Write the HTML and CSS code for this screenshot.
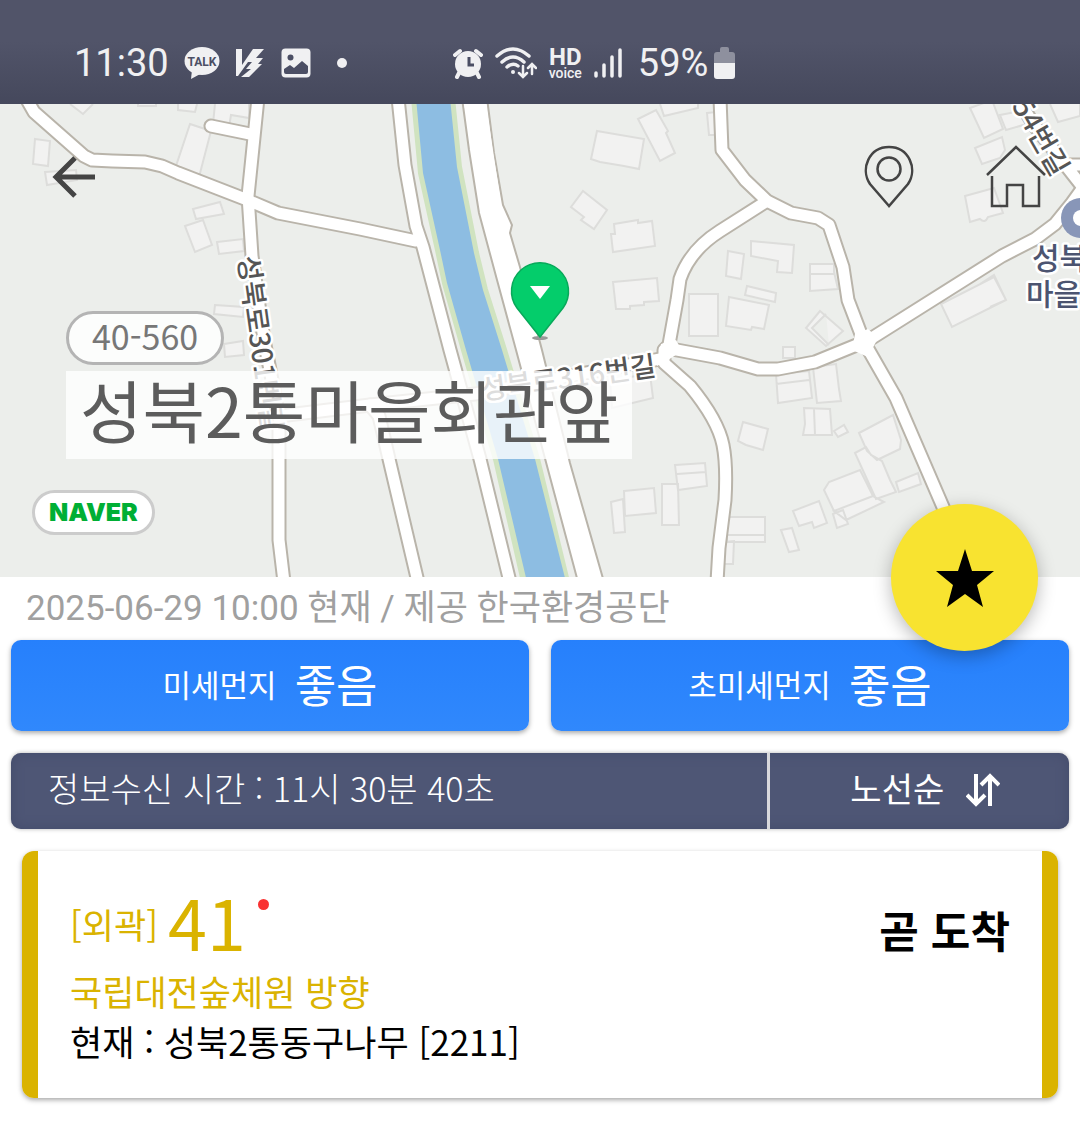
FILE: index.html
```html
<!DOCTYPE html>
<html lang="ko">
<head>
<meta charset="utf-8">
<meta name="viewport" content="width=device-width, initial-scale=1">
<title>성북2통마을회관앞</title>
<link rel="stylesheet" href="styles.css">
</head>
<body>
<div class="status">
  <span class="status-text">11:30</span>
  <div class="status-icons">
    <svg width="36" height="34" viewBox="0 0 36 34" aria-hidden="true"><ellipse cx="18" cy="15" rx="17.500" ry="14" fill="#f0f0f2"/><path d="M8 24L7 33L18 27Z" fill="#f0f0f2"/><text class="talk" x="18" y="20" text-anchor="middle">TALK</text></svg>
    <svg width="29" height="30" viewBox="0 0 29 30" aria-hidden="true"><path fill="#f0f0f2" d="M0 1H6V17L17 1H28L20 10H27L22 16H26L13 29H5L15 21H10L16 14H12L2 28H0Z"/></svg>
    <svg width="30" height="30" viewBox="0 0 30 30" aria-hidden="true"><rect width="29" height="29" x=".5" y=".5" rx="4" fill="#f0f0f2"/><circle cx="9.500" cy="9.500" r="3" fill="#4b4e64"/><path d="M3 21L9 17L13 20L21 13L27 18V24Q27 26 25 26H5Q3 26 3 24Z" fill="#4b4e64"/></svg>
  </div>
  <span class="status-dot"></span>
  <div class="status-right">
    <svg width="30" height="32" viewBox="0 0 30 32" aria-hidden="true"><circle cx="15" cy="17" r="13" fill="#f0f0f2"/><path d="M2 8L7 4M28 8L23 4M6 26L4 30M24 26L26 30" stroke="#f0f0f2" stroke-width="4" stroke-linecap="round"/><path d="M16 10V18H21" fill="none" stroke="#4b4e64" stroke-width="3"/></svg>
    <svg width="42" height="32" viewBox="0 0 42 32" fill="none" stroke="#f0f0f2" stroke-width="3.500" stroke-linecap="round" aria-hidden="true"><path d="M2 9Q18 -5 34 9M7 15Q18 5 29 15M12 20Q18 15 23 19"/><circle cx="18" cy="25" r="2" fill="#f0f0f2" stroke="none"/><path d="M28 19V29M24 26L28 30L32 26M37 27V18M33 21L37 17L41 21" stroke-width="2.500"/></svg>
    <span class="hd"><b>HD</b><small>voice</small></span>
    <svg width="28" height="30" viewBox="0 0 28 30" stroke="#f0f0f2" stroke-width="3.500" stroke-linecap="round" aria-hidden="true"><path d="M2 25V28M10 17V28M18 9V28M26 2V28"/></svg>
    <span class="status-text percent">59%</span>
    <svg width="22" height="34" viewBox="0 0 22 34" aria-hidden="true"><path d="M6 6V3Q6 1 8 1H13Q15 1 15 3V6H18Q21 6 21 9V18H0V9Q0 6 3 6Z" fill="#8e909e"/><path d="M0 17H21V30Q21 33 18 33H3Q0 33 0 30Z" fill="#f0f0f2"/></svg>
  </div>
</div>

<header class="map">
  <svg class="map-canvas" viewBox="0 104 1080 473" preserveAspectRatio="xMidYMid slice" aria-hidden="true">
    <defs>
      <g id="roads">
        <path d="M26 98L34 112L84 156L92 160L112 161L145 162L162 166L178 173L245 199L278 213L360 229L416 241"/>
        <path d="M258 98L248 196L252 256L264 340L274 390L279 420V540L284 582"/>
        <path d="M211 126L250 134"/>
        <path d="M398 98L405 165L416 226L423 247L450 350L480 459L510 582"/>
        <path d="M389 459L418 582M389 459L379 416L370 405"/>
        <path d="M279 416L370 405L475 394L660 359"/>
        <path d="M720 98L722 150L745 180L767 201L791 213L818 218L829 225L843 267L848 300L864 342"/>
        <path d="M767 201L720 231Q690 250 680 279L677 300L668 350"/>
        <path d="M864 343L1002 256L1035 239L1055 224L1072 203L1085 185"/>
        <path d="M1000 70L1034 125L1085 190M1062 165H1090"/>
        <path d="M864 342L815 362L778 369H758L720 358L666 348"/>
        <path d="M864 342L896 398L943 507L956 540"/>
        <path d="M664 350V363L690 386Q718 420 723 445Q727 465 725 500L719 548L717 582"/>
      </g>
    </defs>
    <rect y="104" width="1080" height="473" fill="#eceeeb"/>
    <path d="M416 98L423 173L440 250L447 283L466 350L498 459L526 582H565L535 459L502 350L483 290L474 253L457 167L450 98Z" fill="#8dbde2" stroke="#d0e3c0" stroke-width="10"/>
    <path d="M416 98L423 173L440 250L447 283L466 350L498 459L527 582H566L535 459L502 350L483 290L474 253L457 167L450 98Z" fill="#8dbde2"/>
    <g fill="#f2f2f1" stroke="#dddddb" stroke-width="2">
      <path d="M35 139L50 141L48 166L33 164ZM45 172L76 170L77 180L47 185ZM70 104L83 114L93 104M138 104V106H156V104M178 104V110L195 112L197 104M190 124L211 131L199 177L176 166ZM215 104L213 124L229 127L231 115L249 118V104"/>
      <path d="M193 209L220 202L224 214L196 219ZM185 226L203 220L212 245L195 252ZM217 242L243 239L244 251L219 254ZM215 305L244 307L243 317L214 314ZM224 344L243 341L244 355L225 357Z"/>
      <path d="M597 131L644 139L639 169L624 166L600 162L591 159ZM638 119L656 110L668 131L666 133L675 153L660 161ZM660 104L664 116L698 108V104M707 113L716 112V135L709 135Z"/>
      <path d="M583 191L607 210L594 229L581 220L584 217L571 207ZM614 224L638 220V223L652 221L655 246L613 252L611 234H615ZM613 282L657 278L659 301L644 302V305L630 306V309L616 309ZM689 294H718V336H689Z"/>
      <path d="M751 241L794 245L792 273L777 272L778 261L751 256ZM728 251L744 254L741 279L726 276ZM747 286L776 293L775 302L745 295ZM729 297L769 305L764 329L752 327L751 330L726 326ZM810 264L834 264V272L838 289L810 291ZM810 274H834M820 311L843 331L826 346L806 328ZM826 314L812 328L829 345"/>
      <path d="M970 108L992 100L1003 129L984 138ZM1000 115L1030 109V123L1006 130ZM975 148L1002 137L1005 150L1000 158L982 164ZM965 196L994 188L1003 213L988 217Q985 224 980 219L970 222ZM941 304L994 277L1006 300L952 327ZM980 284L994 275L1006 300L990 307M1050 104L1058 122L1080 116V104"/>
      <path d="M776 374L809 371L812 398L778 403ZM776 384L809 380M813 367L836 364L839 389L841 401L817 403ZM783 347H795V358H783ZM804 408L830 409L832 435H803L805 424ZM814 409L815 435M743 422L768 429L763 450L746 445L738 441ZM834 431L844 425L848 432L838 437Z"/>
      <path d="M859 433L893 415L901 440L900 449L877 460L867 451ZM855 453L866 447L871 455L882 461L890 480L896 492L876 499ZM824 490L829 482L860 470L873 496L834 511ZM834 511L873 496L884 502L846 520ZM833 514L843 510L848 524L837 528ZM896 482L918 473L921 484L899 492ZM793 511L819 501L827 523L814 528L812 522L799 526ZM781 530L792 528L799 550L789 552Z"/>
      <path d="M727 517H765V542H727ZM727 535H765M724 542L734 541L733 564H724ZM675 465L705 463L707 486L678 490ZM677 474L706 472M662 484H678L679 525H662ZM624 491L654 488L656 513L625 516ZM611 502L623 499L625 532L614 533ZM610 380L650 374L653 398L612 408Z"/>
    </g>
    <use href="#roads" class="road-edge"/>
    <path d="M462 98L469 150L479 213L497 280L516 350L578 582H604L570 463L542 350L520 267L510 233L512 225L503 205L494 153L487 98Z" fill="#fff" stroke="#b9b4aa" stroke-width="2"/>
    <use href="#roads" class="road-fill"/>
    <path d="M464 104L500 280L519 350L545 450L558 450L536 350L505 230L486 104Z" fill="#fff"/>
    <path d="M855 334L868 329L878 338L868 357L852 350ZM661 344L676 340L682 351L668 360L657 366Z" fill="#fff"/>
    <g class="road-name">
      <text transform="translate(238 257) rotate(82)">성북로301번길</text>
      <text transform="translate(482 400) rotate(-8)">성북로316번길</text>
      <text transform="translate(1053 178) rotate(60)" text-anchor="end">54번길</text>
    </g>
    <circle cx="1081" cy="218" r="20" fill="#8896b8"/><circle cx="1081" cy="218" r="8" fill="#fff"/>
    <g class="poi"><text x="1032" y="269">성북</text><text x="1026" y="305">마을</text></g>
    <ellipse cx="540" cy="338" rx="8" ry="2" fill="#999"/>
    <path d="M540 337L517 308A28.500 28.500 0 1 1 563 308Z" fill="#04cd6b" stroke="#08a95a" stroke-width="1.500"/>
    <path d="M530 286H550L540 299Z" fill="#fff"/>
  </svg>

  <nav class="nav">
    <button class="icon-btn back" aria-label="뒤로"><svg width="44" height="42" viewBox="0 0 44 42"><path d="M43 21H4M23 2L4 21L23 40" fill="none" stroke="#444" stroke-width="5"/></svg></button>
    <button class="icon-btn" aria-label="위치"><svg width="50" height="63" viewBox="0 0 50 63" fill="none" stroke="#444" stroke-width="2.500"><path d="M25 61L6 39C-4 24 5 2 25 2S54 24 44 39Z"/><circle cx="25" cy="24" r="11.500"/></svg></button>
    <button class="icon-btn" aria-label="홈"><svg width="60" height="63" viewBox="0 0 60 63" fill="none" stroke="#444" stroke-width="2.500"><path d="M1 30L30 2L59 30M6 31V61H21V40H37V61H53V31"/></svg></button>
  </nav>
  <div class="stop">
    <span class="stop-no">40-560</span>
    <h1 class="stop-name">성북2통마을회관앞</h1>
  </div>
  <a class="naver" href="#">NAVER</a>
  <button class="fab" aria-label="즐겨찾기"><svg width="58" height="58" viewBox="0 0 58 58"><path d="M29 0L36 22H58L41 36L47 58L29 45L11 58L17 36L0 22H22Z"/></svg></button>
</header>

<main>
  <p class="air-time">2025-06-29 10:00 현재 / 제공 한국환경공단</p>
  <section class="air">
    <div class="air-card"><span>미세먼지</span><strong>좋음</strong></div>
    <div class="air-card"><span>초미세먼지</span><strong>좋음</strong></div>
  </section>
  <section class="info">
    <span class="info-time">정보수신 시간 : 11시 30분 40초</span>
    <button class="sort">노선순<svg width="34" height="34" viewBox="0 0 34 34" fill="none" stroke="#fff" stroke-width="4" aria-hidden="true"><path d="M10 1V31M1 22L10 31L19 22M24 33V3M15 12L24 3L33 12"/></svg></button>
  </section>
  <article class="bus">
    <div class="bus-main">
      <div class="bus-head"><span class="bus-type">[외곽]</span><span class="bus-no">41</span><span class="live"></span></div>
      <p class="bus-dir">국립대전숲체원 방향</p>
      <p class="bus-now">현재 : 성북2통동구나무 [2211]</p>
    </div>
    <strong class="arrival">곧 도착</strong>
  </article>
</main>
</body>
</html>
```
FILE: styles.css
```css
* { box-sizing: border-box; }

body {
  margin: 0;
  background: #fff;
  font-family: "Noto Sans CJK KR", sans-serif;
  color: #000;
}

h1, p { margin: 0; font-weight: 400; }

button {
  border: 0;
  padding: 0;
  background: none;
  font: inherit;
  color: inherit;
}

svg { display: block; flex: none; }

/* Status bar */
.status {
  display: flex;
  align-items: center;
  height: 104px;
  padding: 22px 24px 0 74px;
  background: linear-gradient(#515469, #515469 40%, #45485c);
  color: #f0f0f2;
  font-family: Roboto, sans-serif;
}

.status-text { font-size: 38px; }

.status-icons {
  display: flex;
  align-items: center;
  gap: 16px;
  margin-left: 15px;
}

.talk { font: 700 12px Roboto, sans-serif; fill: #4b4e64; }

.status-dot {
  width: 10px;
  height: 10px;
  margin-left: 26px;
  border-radius: 50%;
  background: #f0f0f2;
}

.status-right {
  display: flex;
  align-items: center;
  gap: 12px;
  margin-left: 106px;
}

.hd { display: flex; flex-direction: column; align-items: center; }
.hd b { font-size: 24px; line-height: 19px; }
.hd small { font-size: 14px; line-height: 12px; font-weight: 500; }
.percent { margin: 0 -6px 0 4px; }

/* Map header */
.map {
  position: relative;
  display: flex;
  flex-direction: column;
  align-items: flex-start;
  padding: 41px 32px 42px;
}

.map-canvas {
  position: absolute;
  inset: 0;
  width: 100%;
  height: 100%;
}

.road-edge, .road-fill { fill: none; stroke-linejoin: round; stroke-linecap: round; }
.road-edge { stroke: #b9b4aa; stroke-width: 15px; }
.road-fill { stroke: #fff; stroke-width: 11px; }

.road-name, .poi {
  font-weight: 500;
  stroke: #fff;
  stroke-width: 5px;
  stroke-linejoin: round;
  paint-order: stroke;
}
.road-name { font-size: 28px; fill: #555; }
.poi { font-size: 30px; fill: #4c5470; }

.nav, .stop, .naver { position: relative; }

.nav {
  display: flex;
  align-items: center;
  align-self: stretch;
  gap: 72px;
  padding: 0 2px 0 20px;
}

.back { margin-right: auto; }

.stop {
  display: flex;
  flex-direction: column;
  align-items: flex-start;
  gap: 6px;
  margin: 103px 0 31px 34px;
}

.stop-no {
  padding: 0 23px 4px;
  border: 3px solid #b4b4b4;
  border-radius: 27px;
  background: rgba(255, 255, 255, .85);
  color: #777;
  font-size: 34px;
  line-height: 44px;
}

.stop-name {
  padding: 0 14px 12px;
  background: rgba(255, 255, 255, .8);
  color: #5c5c5c;
  font-size: 68px;
  line-height: 76px;
}

.naver {
  padding: 0 14px;
  border: 3px solid #ccc;
  border-radius: 23px;
  background: #fff;
  color: #00af35;
  font: 900 25px/39px Inter, sans-serif;
  text-decoration: none;
}

.fab {
  position: absolute;
  z-index: 1;
  right: 42px;
  bottom: -74px;
  display: flex;
  align-items: center;
  justify-content: center;
  width: 147px;
  height: 147px;
  border-radius: 50%;
  background: #f8e330;
  box-shadow: 0 5px 18px rgba(0, 0, 0, .28);
}

/* Air quality */
main { padding: 0 11px; }

.air-time {
  padding-left: 15px;
  color: #a0a0a0;
  font-family: Roboto, "Noto Sans CJK KR", sans-serif;
  font-size: 35px;
  line-height: 63px;
}

.air { display: grid; grid-template-columns: 1fr 1fr; gap: 22px; }

.air-card {
  display: flex;
  align-items: center;
  justify-content: center;
  gap: 18px;
  height: 91px;
  padding-bottom: 5px;
  border-radius: 10px;
  background: linear-gradient(#2680fc, #3088fc);
  box-shadow: 0 2px 5px rgba(0, 0, 0, .35);
  color: #fff;
  font-size: 31px;
}
.air-card strong { font-size: 45px; font-weight: 400; }

/* Info bar */
.info {
  display: flex;
  margin: 22px 0;
  border-radius: 10px;
  background: #4e5675;
  box-shadow: inset 0 0 12px #434b6b, 0 0 4px rgba(0, 0, 0, .3);
  color: #fff;
  font-size: 34px;
  line-height: 70px;
}

.info-time { flex: 5; padding: 0 0 6px 37px; font-weight: 300; }

.sort {
  display: flex;
  flex: 2;
  align-items: center;
  justify-content: center;
  gap: 22px;
  padding: 0 0 6px 12px;
  border-left: 3px solid #d8d8dc;
}
.sort svg { margin-top: 4px; }

/* Bus card */
.bus {
  display: flex;
  justify-content: space-between;
  align-items: flex-start;
  margin: 0 11px 30px;
  padding: 24px 32px 32px;
  border: solid #dab300;
  border-width: 0 16px;
  border-radius: 12px;
  box-shadow: 0 2px 5px rgba(0, 0, 0, .35);
  font-size: 35px;
  line-height: 50px;
}

.bus-head { display: flex; align-items: center; color: #dab300; }
.bus-type { padding-top: 6px; }
.bus-no { margin: 0 12px 0 10px; font-size: 70px; line-height: 91px; }
.live {
  align-self: flex-start;
  width: 11px;
  height: 11px;
  margin-top: 24px;
  border-radius: 50%;
  background: #f93232;
}
.bus-dir { color: #dab300; }
.arrival { padding-top: 24px; font-size: 43px; line-height: 60px; }
```
